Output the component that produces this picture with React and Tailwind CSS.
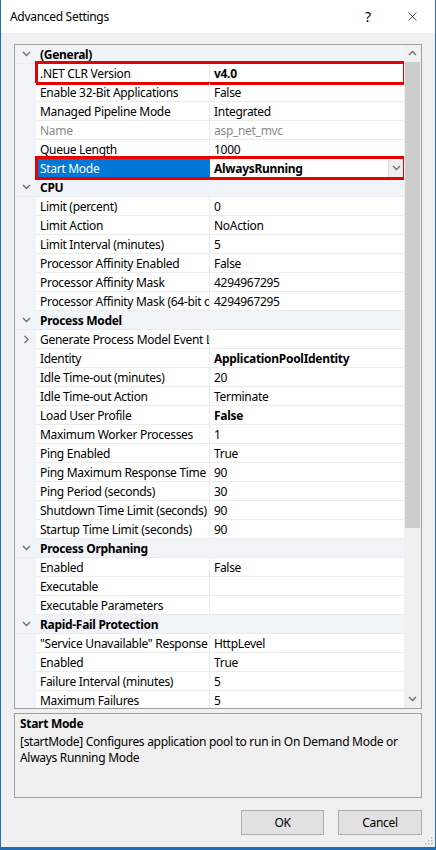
import { X } from "lucide-react";

const GROUPS = [
  {
    name: "(General)",
    rows: [
      { label: ".NET CLR Version", value: "v4.0", bold: true, boxed: true },
      { label: "Enable 32-Bit Applications", value: "False" },
      { label: "Managed Pipeline Mode", value: "Integrated" },
      { label: "Name", value: "asp_net_mvc", muted: true },
      { label: "Queue Length", value: "1000" },
      { label: "Start Mode", value: "AlwaysRunning", bold: true, selected: true, boxed: true },
    ],
  },
  {
    name: "CPU",
    rows: [
      { label: "Limit (percent)", value: "0" },
      { label: "Limit Action", value: "NoAction" },
      { label: "Limit Interval (minutes)", value: "5" },
      { label: "Processor Affinity Enabled", value: "False" },
      { label: "Processor Affinity Mask", value: "4294967295" },
      { label: "Processor Affinity Mask (64-bit option)", value: "4294967295" },
    ],
  },
  {
    name: "Process Model",
    rows: [
      { label: "Generate Process Model Event Log Entry", value: "", expand: true },
      { label: "Identity", value: "ApplicationPoolIdentity", bold: true },
      { label: "Idle Time-out (minutes)", value: "20" },
      { label: "Idle Time-out Action", value: "Terminate" },
      { label: "Load User Profile", value: "False", bold: true },
      { label: "Maximum Worker Processes", value: "1" },
      { label: "Ping Enabled", value: "True" },
      { label: "Ping Maximum Response Time (seconds)", value: "90" },
      { label: "Ping Period (seconds)", value: "30" },
      { label: "Shutdown Time Limit (seconds)", value: "90" },
      { label: "Startup Time Limit (seconds)", value: "90" },
    ],
  },
  {
    name: "Process Orphaning",
    rows: [
      { label: "Enabled", value: "False" },
      { label: "Executable", value: "" },
      { label: "Executable Parameters", value: "" },
    ],
  },
  {
    name: "Rapid-Fail Protection",
    rows: [
      { label: "\"Service Unavailable\" Response Type", value: "HttpLevel" },
      { label: "Enabled", value: "True" },
      { label: "Failure Interval (minutes)", value: "5" },
      { label: "Maximum Failures", value: "5" },
    ],
  },
];

function Chevron({ dir = "down" }) {
  const pts = dir === "down" ? "1,2 4.5,5.5 8,2" : dir === "up" ? "1,6 4.5,2.5 8,6" : "2.5,1 6,4.5 2.5,8";
  return (
    <svg width="9" height="9" viewBox="0 0 9 9" fill="none" stroke="#707070" strokeWidth="1.4">
      <polyline points={pts} />
    </svg>
  );
}

function Row({ row }) {
  return (
    <div className="relative flex h-[19px] shrink-0">
      <div className="w-[21px] shrink-0 bg-[#f0f3f8] flex items-center justify-center pl-[1px]">
        {row.expand && <Chevron dir="right" />}
      </div>
      <div
        className={
          "w-[174px] shrink-0 flex items-center pl-[4px] pt-[2px] overflow-hidden whitespace-nowrap border-b border-r " +
          (row.selected ? "bg-[#0078d7] text-white border-[#0078d7]" : "border-[#ececec] " + (row.muted ? "text-[#8a8a8a]" : "text-black"))
        }
      >
        {row.label}
      </div>
      <div
        className={
          "flex-1 min-w-0 flex items-center pl-[4px] overflow-hidden whitespace-nowrap border-b border-[#ececec] " +
          (row.bold ? "font-bold " : "") +
          (row.muted ? "text-[#8a8a8a]" : "text-black")
        }
      >
        <span className="flex-1 pt-[2px]">{row.value}</span>
        {row.selected && (
          <span className="w-[15px] h-[17px] mr-[1px] bg-[#f0f0f0] border-l border-[#dadada] flex items-center justify-center">
            <Chevron dir="down" />
          </span>
        )}
      </div>
      {row.boxed && (
        <div className="absolute left-[20px] right-[-2px] top-[-3px] bottom-[-2px] border-[3px] border-[#e60000]" />
      )}
    </div>
  );
}

export default function App() {
  return (
    <div className="relative w-[436px] h-[850px] bg-[#f0f0f0] border-x border-b-[3px] border-[#1c6fb8] flex flex-col text-[12px] tracking-[-0.3px] font-['Segoe_UI','Noto_Sans',sans-serif] text-black overflow-hidden">
      <div className="h-[33px] bg-white flex items-center pl-[9px] shrink-0">
        <span className="flex-1 text-[12px] pt-[1px]">Advanced Settings</span>
        <span className="w-[46px] text-center text-[14px] mr-[-2px]">?</span>
        <span className="w-[46px] flex justify-center">
          <X size={15} strokeWidth={1.1} />
        </span>
      </div>

      <div className="flex flex-col px-[13px] pt-[11px]">
        <div className="h-[665px] border border-[#a0a0a0] bg-white flex overflow-hidden">
          <div className="flex-1 min-w-0 flex flex-col overflow-hidden">
            {GROUPS.map((g) => (
              <div key={g.name} className="flex flex-col">
                <div className="h-[19px] shrink-0 flex items-center bg-[#f0f3f8] border-b border-[#ececec]">
                  <span className="w-[21px] flex justify-center pl-[1px]">
                    <Chevron dir="down" />
                  </span>
                  <span className="pl-[4px] pt-[2px] font-bold">{g.name}</span>
                </div>
                {g.rows.map((r) => (
                  <Row key={g.name + r.label} row={r} />
                ))}
              </div>
            ))}
          </div>
          <div className="w-[17px] bg-[#f0f0f0] flex flex-col shrink-0">
            <div className="h-[17px] flex items-center justify-center">
              <Chevron dir="up" />
            </div>
            <div className="mx-[1px] h-[466px] bg-[#cdcdcd]" />
            <div className="flex-1" />
            <div className="h-[17px] flex items-center justify-center">
              <Chevron dir="down" />
            </div>
          </div>
        </div>

        <div className="mt-[4px] h-[85px] border border-[#a0a0a0] bg-[#f0f0f0] px-[5px] pt-[2px] leading-[16px]">
          <div className="font-bold">Start Mode</div>
          <div className="mt-[2px]">[startMode] Configures application pool to run in On Demand Mode or Always Running Mode</div>
        </div>

        <div className="flex justify-end gap-[14px] mt-[12px]">
          <button className="w-[83px] h-[25px] bg-[#e1e1e1] border border-[#adadad] text-[12px]">OK</button>
          <button className="w-[84px] h-[25px] bg-[#e1e1e1] border border-[#adadad] text-[12px]">Cancel</button>
        </div>
      </div>

      <svg className="absolute right-[2px] bottom-[2px]" width="10" height="10" viewBox="0 0 10 10" fill="#b8b8b8">
        <rect x="8" y="2" width="1.5" height="1.5" />
        <rect x="5" y="5" width="1.5" height="1.5" />
        <rect x="8" y="5" width="1.5" height="1.5" />
        <rect x="2" y="8" width="1.5" height="1.5" />
        <rect x="5" y="8" width="1.5" height="1.5" />
        <rect x="8" y="8" width="1.5" height="1.5" />
      </svg>
    </div>
  );
}
